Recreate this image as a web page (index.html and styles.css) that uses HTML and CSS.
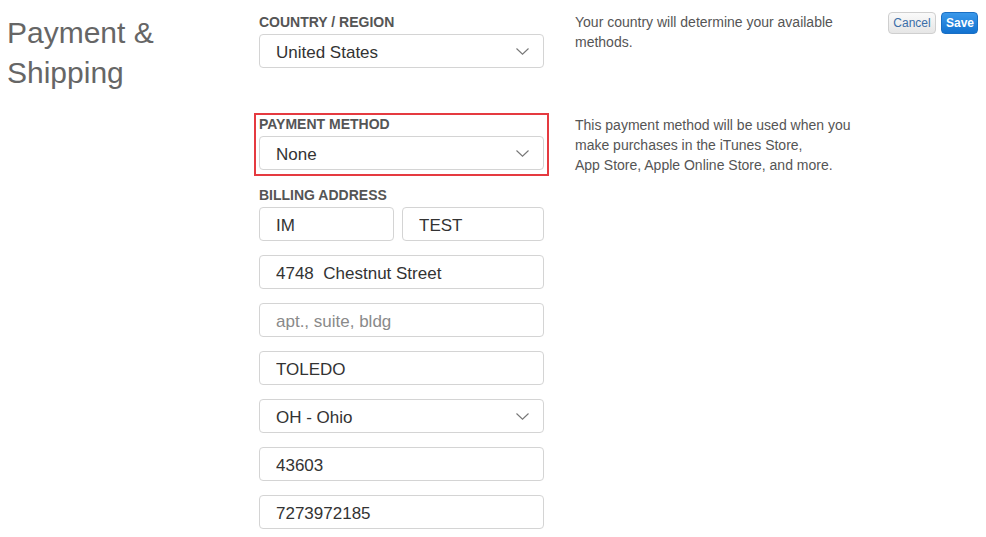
FILE: index.html
```html
<!DOCTYPE html>
<html lang="en">
<head>
<meta charset="utf-8">
<title>Payment &amp; Shipping</title>
<link rel="stylesheet" href="styles.css">
</head>
<body>
<div class="page">
  <h1 class="title">Payment &amp;<br>Shipping</h1>
  <div class="content">
    <section class="row row-country">
      <div class="fields">
        <div class="label">COUNTRY / REGION</div>
        <div class="select">
          <span class="value">United States</span>
          <svg class="chev" width="13" height="7" viewBox="0 0 13 7"><path d="M0.5 0.5 L6.5 6.2 L12.5 0.5" fill="none" stroke="#777" stroke-width="1.1"/></svg>
        </div>
      </div>
      <p class="desc">Your country will determine your available methods.</p>
      <div class="actions">
        <button class="btn btn-cancel">Cancel</button>
        <button class="btn btn-save">Save</button>
      </div>
    </section>

    <section class="row row-payment">
      <div class="fields">
        <div class="highlight">
          <div class="label">PAYMENT METHOD</div>
          <div class="select">
            <span class="value">None</span>
            <svg class="chev" width="13" height="7" viewBox="0 0 13 7"><path d="M0.5 0.5 L6.5 6.2 L12.5 0.5" fill="none" stroke="#777" stroke-width="1.1"/></svg>
          </div>
        </div>
        <div class="label label-billing">BILLING ADDRESS</div>
        <div class="name-row">
          <input class="input" type="text" value="IM">
          <input class="input" type="text" value="TEST">
        </div>
        <input class="input" type="text" value="4748  Chestnut Street">
        <input class="input" type="text" placeholder="apt., suite, bldg">
        <input class="input" type="text" value="TOLEDO">
        <div class="select">
          <span class="value">OH - Ohio</span>
          <svg class="chev" width="13" height="7" viewBox="0 0 13 7"><path d="M0.5 0.5 L6.5 6.2 L12.5 0.5" fill="none" stroke="#777" stroke-width="1.1"/></svg>
        </div>
        <input class="input" type="text" value="43603">
        <input class="input" type="text" value="7273972185">
      </div>
      <p class="desc">This payment method will be used when you make purchases in the iTunes Store,<br>App Store, Apple Online Store, and more.</p>
    </section>
  </div>
</div>
</body>
</html>
```

FILE: styles.css
```css
* { box-sizing: border-box; }
html, body { background: #fff; }
body {
  margin: 8px;
  font-family: "Liberation Sans", Arial, Helvetica, sans-serif;
  color: #333;
}
.page {
  display: flex;
  padding-top: 6px;
}
.title {
  width: 252px;
  flex: none;
  margin: -1px 0 0 -1px;
  font-size: 30px;
  line-height: 40px;
  font-weight: normal;
  color: #666;
}
.content {
  flex: 1;
  display: flex;
  flex-direction: column;
}
.row {
  display: flex;
  align-items: flex-start;
}
.fields {
  width: 285px;
  flex: none;
  display: flex;
  flex-direction: column;
}
.label {
  font-size: 14px;
  line-height: 16px;
  font-weight: bold;
  color: #555;
  margin-bottom: 4px;
}
.select, .input {
  height: 34px;
  border: 1px solid #d4d4d4;
  border-radius: 4px;
  background: #fff;
  font-family: "Liberation Sans", Arial, Helvetica, sans-serif;
  font-size: 17px;
  color: #333;
  padding: 0 14px 0 16px;
}
.select {
  display: flex;
  align-items: center;
  justify-content: space-between;
}
.value { padding-top: 3px; }
.chev { flex: none; }
.input {
  width: 100%;
  outline: none;
  margin: 0;
  padding-top: 3px;
}
.input::placeholder { color: #8a8a8a; }
.row-payment .fields > .input,
.row-payment .fields > .select,
.row-payment .fields > .name-row { margin-bottom: 14px; }
.name-row {
  display: grid;
  grid-template-columns: 135px 1fr;
  gap: 8px;
}
.desc {
  width: 292px;
  margin: -2px 0 0 31px;
  font-size: 14px;
  line-height: 20px;
  color: #555;
}
.row-payment .desc { margin-top: 2px; }
.actions {
  margin-left: auto;
  margin-top: -2px;
  display: flex;
  gap: 5px;
}
.btn {
  height: 22px;
  border-radius: 4px;
  font-family: "Liberation Sans", Arial, Helvetica, sans-serif;
  font-size: 12px;
  padding: 0 4px;
  cursor: pointer;
}
.btn-cancel {
  width: 48px;
  border: 1px solid #cfcfcf;
  background: linear-gradient(#fafafa, #e6e6e6);
  color: #3b6ea8;
}
.btn-save {
  width: 37px;
  border: 1px solid #1a6fc4;
  background: linear-gradient(#3a98ea, #1272d0);
  color: #fff;
  font-weight: bold;
}
.row-payment { margin-top: 45px; }
.highlight {
  margin: 0 -5px;
  padding: 1px 3px 4px;
  border: 2px solid #e53a40;
  display: flex;
  flex-direction: column;
}
.label-billing { margin-top: 11px; }
```
